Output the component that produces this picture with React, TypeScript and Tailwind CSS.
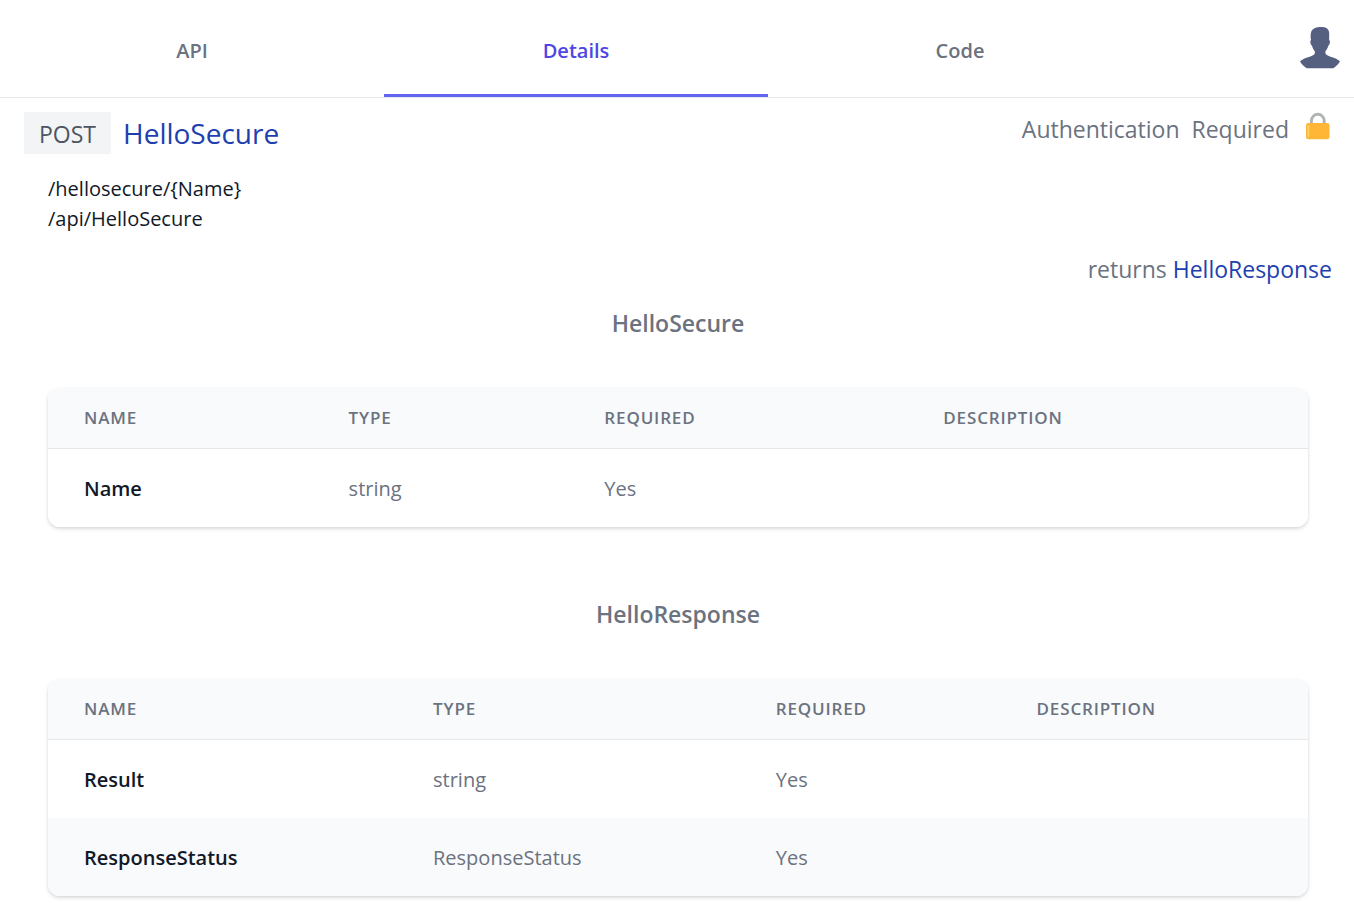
type Row = { name: string; type: string; required: string; description: string };

const tabs = ["API", "Details", "Code"];

const requestRows: Row[] = [{ name: "Name", type: "string", required: "Yes", description: "" }];

const responseRows: Row[] = [
  { name: "Result", type: "string", required: "Yes", description: "" },
  { name: "ResponseStatus", type: "ResponseStatus", required: "Yes", description: "" },
];

function Avatar() {
  return (
    <svg viewBox="0 0 42 44" className="h-11 w-[42px]" aria-hidden="true">
      <path
        fill="#556080"
        d="M20.500 0c3.600-.3 6.300.4 7.800 1.700 1.500 1.300 2 3.300 1.900 6.200l-.1 5c.9.4 1 1.400.8 2.600-.2 1.500-.8 2.900-1.700 3.400-.5 2-1.500 3.600-2.600 5-.4 1.400-.3 2.800.5 3.700 1.900 1.700 5.400 2.300 8.300 3.500 2.500 1 4.400 2.200 5.600 3.400-1.800 2.700-4 5-6.600 6.700H7.600C5 39.500 2.700 37.200 1 34.500c1.200-1.200 3.200-2.400 5.700-3.400 2.900-1.200 6.700-1.900 8.500-3.500.8-.9.900-2.300.4-3.700-1.100-1.400-2-3-2.500-5-.9-.5-1.500-1.900-1.700-3.400-.2-1.200-.1-2.200.6-2.600-.4-2.200-.6-4.600-.1-6.900.6-3.500 4.200-5.800 8.600-6z"
      />
    </svg>
  );
}

function Lock() {
  return (
    <svg viewBox="0 0 28 28" className="size-7" aria-hidden="true">
      <path d="M7.400 13V8.700a6.400 6.400 0 0 1 12.800 0V13" fill="none" stroke="#b0b4b5" strokeWidth="2.900" />
      <rect x="2" y="11" width="23.500" height="16.300" rx="2.400" fill="#ffb636" />
      <rect x="3.600" y="13.200" width="1.600" height="12" rx=".8" fill="#ffd469" />
    </svg>
  );
}

function PropertyTable({ title, rows, widths }: { title: string; rows: Row[]; widths: string[] }) {
  const id = `${title}-heading`;
  return (
    <section>
      <h2 id={id} className="text-center text-[23px] font-semibold leading-9 text-[#6b7280]">
        {title}
      </h2>
      <div className="mx-6 mt-[47px] overflow-hidden rounded-xl shadow-[0_2px_4px_rgba(0,0,0,0.12),0_1px_3px_rgba(0,0,0,0.06)]">
        <table aria-labelledby={id} className="w-full table-fixed text-left">
          <colgroup>
            {widths.map((w, i) => (
              <col key={i} className={w} />
            ))}
          </colgroup>
          <thead className="border-b border-[#e5e7eb] bg-[#f9fafb]">
            <tr>
              {["Name", "Type", "Required", "Description"].map((h) => (
                <th
                  key={h}
                  scope="col"
                  className="px-9 py-[18px] text-[17px] font-semibold uppercase leading-6 tracking-wider text-[#6b7280]"
                >
                  {h}
                </th>
              ))}
            </tr>
          </thead>
          <tbody>
            {rows.map((r) => (
              <tr key={r.name} className="odd:bg-white even:bg-[#f9fafb]">
                <td className="px-9 pb-[23px] pt-[25px] text-xl font-semibold leading-[30px] text-[#111827]">{r.name}</td>
                <td className="px-9 pb-[23px] pt-[25px] text-xl leading-[30px] text-[#6b7280]">{r.type}</td>
                <td className="px-9 pb-[23px] pt-[25px] text-xl leading-[30px] text-[#6b7280]">{r.required}</td>
                <td className="px-9 pb-[23px] pt-[25px] text-xl leading-[30px] text-[#6b7280]">{r.description}</td>
              </tr>
            ))}
          </tbody>
        </table>
      </div>
    </section>
  );
}

export default function App() {
  return (
    <div className="bg-white font-['Open_Sans','Noto_Sans',sans-serif]">
      <header className="flex h-[98px] items-stretch border-b border-[#e5e7eb]">
        <nav className="flex flex-1" aria-label="Tabs">
          {tabs.map((t) => (
            <a
              key={t}
              href={`#${t.toLowerCase()}`}
              aria-current={t === "Details" ? "page" : undefined}
              className={
                t === "Details"
                  ? "flex flex-1 items-center justify-center border-b-[3px] border-[#6366f1] pt-[7px] text-xl font-semibold text-[#4f46e5]"
                  : "flex flex-1 items-center justify-center border-b-[3px] border-transparent pt-[7px] text-xl font-semibold text-[#6b7280]"
              }
            >
              {t}
            </a>
          ))}
        </nav>
        <div className="flex w-[202px] items-center justify-end pr-[13px]">
          <button type="button" aria-label="Account">
            <Avatar />
          </button>
        </div>
      </header>

      <main className="pb-2 pl-6 pr-[22px] pt-3.5">
        <div className="flex items-start justify-between">
          <h1 className="flex items-start gap-3">
            <span className="bg-[#f3f4f6] px-[15px] pb-0.5 pt-1 text-[23px] leading-9 text-[#4b5563]">POST</span>
            <span className="text-[28px] leading-[42px] text-[#1e40af]">HelloSecure</span>
          </h1>
          <p className="flex items-start gap-[15px] text-[23px] leading-[34px] text-[#6b7280]">
            <span className="whitespace-pre">Authentication  Required</span>
            <Lock />
          </p>
        </div>
        <div className="mt-5 px-6 text-xl leading-[30px] text-[#111827]">
          <div>/hellosecure/&#123;Name&#125;</div>
          <div>/api/HelloSecure</div>
        </div>
        <p className="mt-[17px] text-right text-[23px] leading-9 text-[#6b7280]">
          returns{" "}
          <a href="#HelloResponse-heading" className="text-[#1e40af]">
            HelloResponse
          </a>
        </p>
        <div className="mt-[18px] flex flex-col gap-[69px]">
          <PropertyTable title="HelloSecure" rows={requestRows} widths={["w-[21%]", "w-[20.3%]", "w-[26.9%]", ""]} />
          <PropertyTable title="HelloResponse" rows={responseRows} widths={["w-[27.7%]", "w-[27.2%]", "w-[20.7%]", ""]} />
        </div>
      </main>
    </div>
  );
}
